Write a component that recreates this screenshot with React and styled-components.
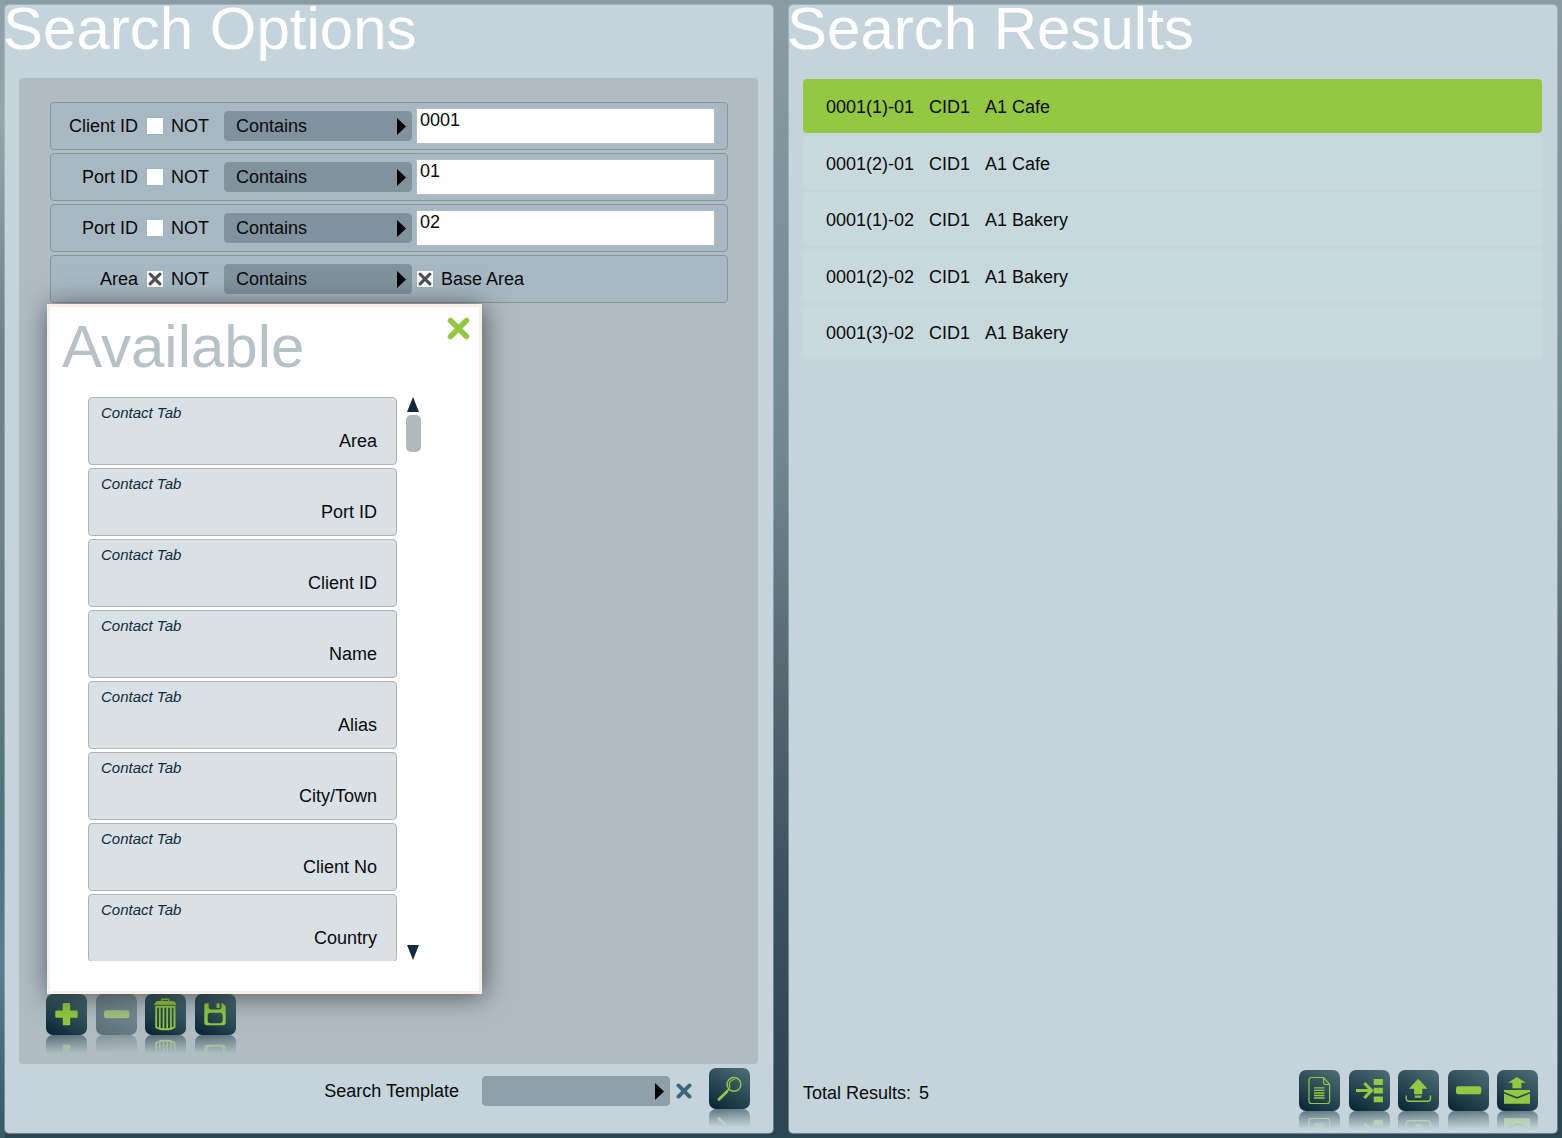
import React, { useState } from 'react'
import styled, { createGlobalStyle } from 'styled-components'

const rows = [
	{ id: 'client', label: 'Client ID', not: false, value: '0001' },
	{ id: 'port1', label: 'Port ID', not: false, value: '01' },
	{ id: 'port2', label: 'Port ID', not: false, value: '02' },
	{ id: 'area', label: 'Area', not: true, option: 'Base Area' },
]

const fields = [
	'Area',
	'Port ID',
	'Client ID',
	'Name',
	'Alias',
	'City/Town',
	'Client No',
	'Country',
]

const results = [
	['0001(1)-01', 'CID1', 'A1 Cafe'],
	['0001(2)-01', 'CID1', 'A1 Cafe'],
	['0001(1)-02', 'CID1', 'A1 Bakery'],
	['0001(2)-02', 'CID1', 'A1 Bakery'],
	['0001(3)-02', 'CID1', 'A1 Bakery'],
]

// all drawings share the 41 unit button grid
const icons = {
	plus: (
		<path d='M17.7 9h5.6q.9 0 .9.9v6.6h6.6q.9 0 .9.9v5.4q0 .9-.9.9h-6.6v6.7q0 .9-.9.9h-5.6q-.9 0-.9-.9v-6.7h-6.6q-.9 0-.9-.9v-5.4q0-.9.9-.9h6.6V9.9q0-.9.9-.9z' />
	),
	minus: <rect x='8' y='16.2' width='25.3' height='8' rx='2.2' />,
	trash: (
		<>
			<path
				d='M16.8 7.5V5.2h6.9v2.3'
				fill='none'
				stroke='currentColor'
				strokeWidth='1.4'
			/>
			<path d='M12 7h16.5q2.5 1.5 3 3.8H9Q9.5 8.5 12 7z' />
			<path
				d='M11.2 12.7h18.3v20.3q-2.5 2.3-9.15 2.3T11.2 33z'
				fill='none'
				stroke='currentColor'
				strokeWidth='1.9'
			/>
			<path
				d='M14.8 13v21M18.5 13v22M22.2 13v22M25.9 13v21'
				fill='none'
				stroke='currentColor'
				strokeWidth='1.7'
			/>
		</>
	),
	save: (
		<>
			<path
				fillRule='evenodd'
				d='M9.3 11q0-1.7 1.7-1.7h2.7v4.3q0 2 2 2h8.8q2 0 2-2V9.3h1.3l2.9 2.9v16.3q0 2.8-2.8 2.8H12.100q-2.8 0-2.8-2.8zM15.500 18.700q-2.8 0-2.8 2.8v5q0 2.8 2.8 2.8h9.400q2.8 0 2.8-2.8v-5q0-2.8-2.8-2.8z'
			/>
			<rect x='21.5' y='9.3' width='3.2' height='4.6' rx='.6' />
		</>
	),
	search: (
		<g fill='none' stroke='currentColor' strokeLinecap='round'>
			<circle cx='25' cy='16.3' r='6.9' strokeWidth='1.5' />
			<path d='M20.3 16.5q.4-4.5 5.2-5M21 19.5q-.8-1.6-.4-3.2' strokeWidth='1.2' />
			<path d='M19.800 21.4L17.8 23.4' strokeWidth='1.5' />
			<path d='M17.8 23.700L10 31.3' strokeWidth='3' />
		</g>
	),
	document: (
		<g fill='none' stroke='currentColor'>
			<path
				d='M24.5 7.5H12.5q-2.5 0-2.5 2.5v21q0 2.5 2.5 2.5h15.6q2.5 0 2.5-2.5V14.5zV12q0 2.5 2.5 2.5h3.6'
				strokeWidth='1.2'
			/>
			<path
				d='M15 17.8h10.5M15 20.4h10.5M15 23h10.5M15 25.5h10.5M15 28h10.5'
				strokeWidth='1.3'
			/>
		</g>
	),
	moveTo: (
		<>
			<path
				d='M7 20.5h15M15.3 13l7.2 7.5-7.2 7.5'
				fill='none'
				stroke='currentColor'
				strokeWidth='3.2'
			/>
			<path d='M24.7 9h9.2v5.9h-9.2zM24.7 17.7h9.2v5.7h-9.2zM24.7 26.6h9.2v5.6h-9.2z' />
		</>
	),
	upload: (
		<>
			<path d='M20.2 8.8l9.3 10h-5.2v5.5h-8.2v-5.5h-5.2zM16.6 25.5h7.2l-.6 2.2h-6z' />
			<path
				d='M8.2 25.5v2.7q0 3 3 3h18.3q3 0 3-3v-2.7'
				fill='none'
				stroke='currentColor'
				strokeWidth='1.4'
			/>
		</>
	),
	send: (
		<>
			<path d='M19.9 6.9l9 5.9h-4.5v5.4h-9v-5.4h-4.5z' />
			<path d='M7 20h26v1.9l-13 5-13-5zM7 23.6l13 5.2 13-5.2v10.2H7z' />
		</>
	),
}

const Cross = ({ size, width = 4 }) => (
	<svg width={size} height={size} viewBox='0 0 23 23' aria-hidden='true'>
		<path
			d='M3.5 3.5l16 16M19.5 3.5l-16 16'
			fill='none'
			stroke='currentColor'
			strokeWidth={width}
			strokeLinecap='round'
		/>
	</svg>
)

const Tool = ({ icon, label, disabled }) => (
	<ToolButton type='button' aria-label={label} disabled={disabled}>
		<svg viewBox='0 0 41 41' fill='currentColor' aria-hidden='true'>
			{icons[icon]}
		</svg>
	</ToolButton>
)

const Check = ({ label, checked }) => {
	const [on, setOn] = useState(checked)
	return (
		<CheckLabel>
			<CheckBox>
				<input type='checkbox' checked={on} onChange={() => setOn(!on)} />
				{on && <Cross size={14} width={5} />}
			</CheckBox>
			{label}
		</CheckLabel>
	)
}

const Dropdown = ({ id, label, options = [], $light }) => (
	<SelectBox $light={$light}>
		<select id={id} aria-label={label}>
			{options.map((o) => (
				<option key={o}>{o}</option>
			))}
		</select>
		<svg width='9' height='17' viewBox='0 0 9 17' aria-hidden='true'>
			<path d='M0 0l9 8.5L0 17z' />
		</svg>
	</SelectBox>
)

const App = () => {
	const [open, setOpen] = useState(true)
	const [selected, setSelected] = useState(0)

	return (
		<>
			<GlobalStyle />
			<Page>
				<Panel>
					<Title>Search Options</Title>
					<Options>
						{rows.map((r) => (
							<Criterion key={r.id}>
								<FieldName>{r.label}</FieldName>
								<Check label='NOT' checked={r.not} />
								<Dropdown
									label={`${r.label} match`}
									options={['Contains', 'Equals', 'Starts with']}
								/>
								{r.option ? (
									<Check label={r.option} checked />
								) : (
									<Value rows={1} aria-label={r.label} defaultValue={r.value} />
								)}
							</Criterion>
						))}

						{/* available fields */}
						{open && (
							<Popup role='dialog' aria-label='Available'>
								<PopupHeader>
									<h2>Available</h2>
									<IconButton
										type='button'
										$color='#93c840'
										aria-label='Close'
										onClick={() => setOpen(false)}
									>
										<Cross size={23} width={5.5} />
									</IconButton>
								</PopupHeader>
								<Picker>
									<FieldList>
										{fields.map((f) => (
											<Field key={f} type='button'>
												<em>Contact Tab</em>
												<span>{f}</span>
											</Field>
										))}
									</FieldList>
									<Scroller>
										<IconButton type='button' $color='#122b3c' aria-label='Scroll up'>
											<svg width='13' height='15' viewBox='0 0 13 15'>
												<path d='M6 0l6 15H0z' fill='currentColor' />
											</svg>
										</IconButton>
										<Thumb />
										<IconButton type='button' $color='#122b3c' aria-label='Scroll down'>
											<svg width='13' height='15' viewBox='0 0 13 15'>
												<path d='M0 0h12L6 15z' fill='currentColor' />
											</svg>
										</IconButton>
									</Scroller>
								</Picker>
							</Popup>
						)}
						{/* end of available fields */}

						<OptionTools>
							<Tool icon='plus' label='Add' />
							<Tool icon='minus' label='Remove' disabled />
							<Tool icon='trash' label='Delete' />
							<Tool icon='save' label='Save' />
						</OptionTools>
					</Options>
					<TemplateBar>
						<label htmlFor='template'>Search Template</label>
						<Dropdown id='template' $light />
						<IconButton type='button' $color='#3d647c' aria-label='Clear template'>
							<Cross size={16} width={5.5} />
						</IconButton>
						<Tool icon='search' label='Search' />
					</TemplateBar>
				</Panel>

				<Panel>
					<Title>Search Results</Title>
					<Results>
						{results.map((r, index) => (
							<Result
								key={index}
								type='button'
								$active={selected === index}
								onClick={() => setSelected(index)}
							>
								{r.map((cell) => (
									<span key={cell}>{cell}</span>
								))}
							</Result>
						))}
					</Results>
					<ResultBar>
						<Total>
							<span>Total Results:</span>
							<span>{results.length}</span>
						</Total>
						<ResultTools>
							<Tool icon='document' label='Report' />
							<Tool icon='moveTo' label='Add to list' />
							<Tool icon='upload' label='Export' />
							<Tool icon='minus' label='Remove result' />
							<Tool icon='send' label='Send' />
						</ResultTools>
					</ResultBar>
				</Panel>
			</Page>
		</>
	)
}

const GlobalStyle = createGlobalStyle`
	* {
		box-sizing: border-box;
	}
	body {
		margin: 0;
		color: #0a0a0a;
		font-family: 'Liberation Sans', Arial, sans-serif;
		font-size: 18px;
		line-height: 22px;
	}
	button,
	select,
	textarea {
		margin: 0;
		color: inherit;
		font: inherit;
	}
	button {
		cursor: pointer;
	}
`

const Page = styled.main`
	min-height: 100vh;
	display: grid;
	grid-template-columns: 1fr 1fr;
	gap: 14px;
	padding: 4px;
	background:
		linear-gradient(
				#8e9fa6 0%,
				#97a5a9 11%,
				#6d7f8e 31%,
				#71818e 45%,
				#4f707c 74%,
				#5d7c93 85%,
				#3d5a68 98%
			)
			0 0 / 5px 100% no-repeat,
		linear-gradient(#8a9ca4 0%, #6f8890 40%, #53646f 62%, #3b5160 78%, #2c4552 98%);
`

const Panel = styled.section`
	display: flex;
	flex-direction: column;
	min-width: 0;
	padding: 0 15px 0 14px;
	background: #c4d4da;
	background-clip: padding-box;
	border: 1px solid rgba(196, 212, 218, 0.4);
	border-radius: 5px;
`

const Title = styled.h1`
	margin: 0 0 25px -16px;
	color: #fff;
	font-size: 60px;
	font-weight: 400;
	line-height: 48px;
`

const Options = styled.div`
	position: relative;
	flex: 1;
	display: flex;
	flex-direction: column;
	gap: 3px;
	padding: 24px 30px 29px 31px;
	background: #afbcc1;
	border-radius: 4px;
`

const Criterion = styled.div`
	height: 48px;
	display: flex;
	align-items: center;
	padding-right: 12px;
	background: #a7b8c2;
	border: 1px solid #87949a;
	border-radius: 4px;
`

const FieldName = styled.span`
	width: 87px;
	margin-right: 8px;
	text-align: right;
`

const CheckLabel = styled.label`
	display: flex;
	align-items: center;
	gap: 7px;
`

const CheckBox = styled.span`
	display: grid;
	place-items: center;
	color: #505050;
	input,
	svg {
		grid-area: 1 / 1;
	}
	input {
		appearance: none;
		width: 18px;
		height: 18px;
		margin: 0;
		background: #fff;
		border: 1px solid #9bb7c6;
	}
	svg {
		pointer-events: none;
	}
`

const SelectBox = styled.span`
	width: 188px;
	flex-shrink: 0;
	display: grid;
	align-items: center;
	margin: ${(p) => (p.$light ? '0 6px 0 23px' : '0 4px 0 15px')};
	select,
	svg {
		grid-area: 1 / 1;
	}
	select {
		appearance: none;
		width: 100%;
		height: 30px;
		padding: 0 11px;
		background: ${(p) => (p.$light ? '#8ea0a9' : '#7f929d')};
		border: 1px solid ${(p) => (p.$light ? '#939da2' : '#87929a')};
		border-radius: 4px;
	}
	svg {
		justify-self: end;
		margin-right: 6px;
		fill: #000;
		pointer-events: none;
	}
`

const Value = styled.textarea`
	flex: 1;
	align-self: flex-start;
	min-width: 0;
	height: 36px;
	margin-top: 5px;
	padding: 0 3px;
	background: #fff;
	border: 1px solid #b3bcc3;
	border-radius: 0;
	resize: none;
	overflow: hidden;
`

const IconButton = styled.button`
	display: flex;
	padding: 0;
	color: ${(p) => p.$color};
	background: none;
	border: none;
`

const Popup = styled.div`
	position: absolute;
	z-index: 1;
	top: 226px;
	left: 28px;
	width: 435px;
	padding: 10px 9px 30px 12px;
	background: #fff;
	border: 3px solid #fbeee6;
	box-shadow: 2px 2px 26px rgba(0, 0, 0, 0.55);
`

const PopupHeader = styled.div`
	display: flex;
	justify-content: space-between;
	align-items: flex-start;
	margin-bottom: 20px;
	h2 {
		margin: 0;
		color: #b6c1c8;
		font-size: 60px;
		font-weight: 400;
		line-height: 60px;
	}
`

const Picker = styled.div`
	display: flex;
	gap: 9px;
	padding-left: 26px;
`

const FieldList = styled.div`
	width: 309px;
	height: 564px;
	display: flex;
	flex-direction: column;
	gap: 3px;
	overflow: hidden;
`

const Field = styled.button`
	height: 68px;
	flex-shrink: 0;
	display: flex;
	flex-direction: column;
	justify-content: space-between;
	padding: 4px 19px 12px 12px;
	background: #d9e1e7;
	border: 1px solid #b0b3b5;
	border-radius: 4px;
	em {
		align-self: flex-start;
		color: #122b3c;
		font-size: 15px;
	}
	span {
		align-self: flex-end;
	}
`

const Scroller = styled.div`
	width: 15px;
	display: flex;
	flex-direction: column;
	align-items: center;
	gap: 3px;
	padding-bottom: 1px;
	button:last-child {
		margin-top: auto;
	}
`

const Thumb = styled.div`
	width: 15px;
	height: 37px;
	background: #b0b9bc;
	border-radius: 5px;
`

const ToolButton = styled.button`
	width: 41px;
	height: 41px;
	padding: 0;
	color: #93c840;
	background: linear-gradient(30deg, #0b2a38 8%, #2c4a56 50%, #4c6b74 95%);
	border: none;
	border-radius: 7px;
	-webkit-box-reflect: below 0 linear-gradient(transparent 55%, rgba(0, 0, 0, 0.55));
	svg {
		display: block;
	}
	&:disabled {
		opacity: 0.5;
	}
`

const Tools = styled.div`
	display: flex;
	justify-content: space-between;
`

const OptionTools = styled(Tools)`
	width: 190px;
	margin-top: auto;
	margin-left: -4px;
`

const ResultTools = styled(Tools)`
	width: 239px;
`

const TemplateBar = styled.div`
	height: 69px;
	display: flex;
	align-items: flex-start;
	justify-content: flex-end;
	padding: 4px 8px 0 0;
	> label {
		padding-top: 12px;
	}
	> ${SelectBox} {
		padding-top: 8px;
	}
	> ${IconButton} {
		margin-right: 17px;
		padding-top: 15px;
	}
`

const Results = styled.div`
	height: 280px;
	display: flex;
	flex-direction: column;
	justify-content: space-between;
	margin-top: 1px;
`

const Result = styled.button`
	height: 54px;
	display: flex;
	align-items: center;
	gap: 15px;
	padding: 2px 23px 0;
	background: ${(p) => (p.$active ? '#93c840' : '#c8d9dd')};
	border: none;
	border-radius: 4px;
`

const ResultBar = styled.div`
	display: flex;
	align-items: center;
	justify-content: space-between;
	margin-top: auto;
	padding: 0 4px 22px 0;
`

const Total = styled.div`
	display: flex;
	gap: 8px;
	padding-top: 4px;
`

export default App
